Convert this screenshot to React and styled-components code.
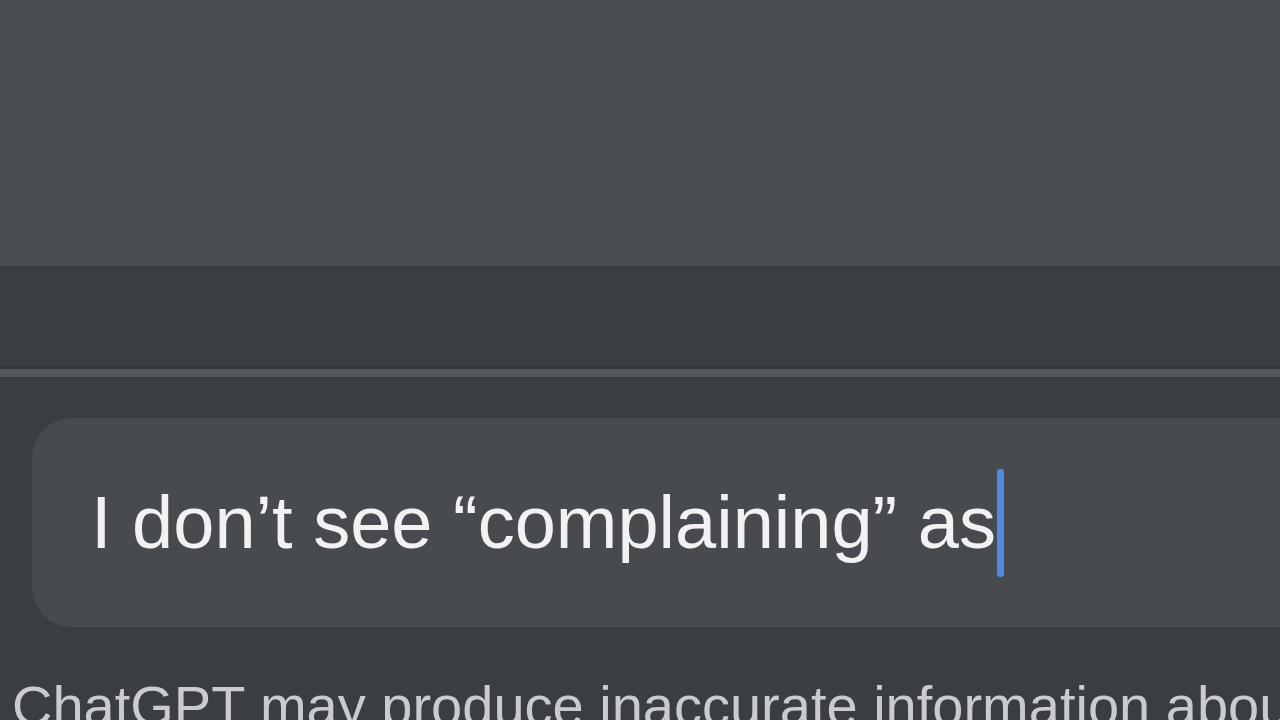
import styled, { createGlobalStyle } from 'styled-components';

const GlobalStyle = createGlobalStyle`
  html, body {
    margin: 0;
    padding: 0;
    background: #3a3e42;
  }
  * {
    box-sizing: border-box;
  }
`;

export default function App() {
  return (
    <>
      <GlobalStyle />
      <Page>
        <Conversation />
        <Composer>
          <Band />
          <Divider />
          <InputWrap>
            <InputBox>
              <InputText>
                I don’t see “complaining” as
                <Caret />
              </InputText>
            </InputBox>
          </InputWrap>
          <Disclaimer>
            ChatGPT may produce inaccurate information about people, places, or facts.
          </Disclaimer>
        </Composer>
      </Page>
    </>
  );
}

const Page = styled.div`
  display: flex;
  flex-direction: column;
  width: 1280px;
  height: 720px;
  overflow: hidden;
  font-family: 'Liberation Sans', Arial, sans-serif;
`;

const Conversation = styled.div`
  height: 266px;
  flex-shrink: 0;
  background: #4a4e53;
`;

const Composer = styled.div`
  display: flex;
  flex-direction: column;
  flex: 1;
  background: #3a3e42;
`;

const Band = styled.div`
  height: 100px;
  flex-shrink: 0;
`;

const Divider = styled.div`
  height: 14px;
  flex-shrink: 0;
  border-top: 3px solid #34383c;
  border-bottom: 3px solid #36393d;
  background: #53575b;
`;

const InputWrap = styled.div`
  display: flex;
  padding: 38px 0 0 32px;
`;

const InputBox = styled.div`
  display: flex;
  align-items: center;
  flex: 1;
  height: 209px;
  margin-right: -60px;
  padding-left: 59px;
  border-radius: 40px;
  background: #474b50;
`;

const InputText = styled.div`
  display: flex;
  align-items: center;
  font-size: 74px;
  line-height: 1;
  color: #f2f2f2;
  white-space: nowrap;
`;

const Caret = styled.span`
  display: inline-block;
  width: 7px;
  height: 108px;
  margin-left: 1px;
  border-radius: 3px;
  background: #4f8be0;
`;

const Disclaimer = styled.div`
  margin-top: 51px;
  padding-left: 12px;
  font-size: 56px;
  line-height: 1;
  color: #c9cbce;
  white-space: nowrap;
`;
